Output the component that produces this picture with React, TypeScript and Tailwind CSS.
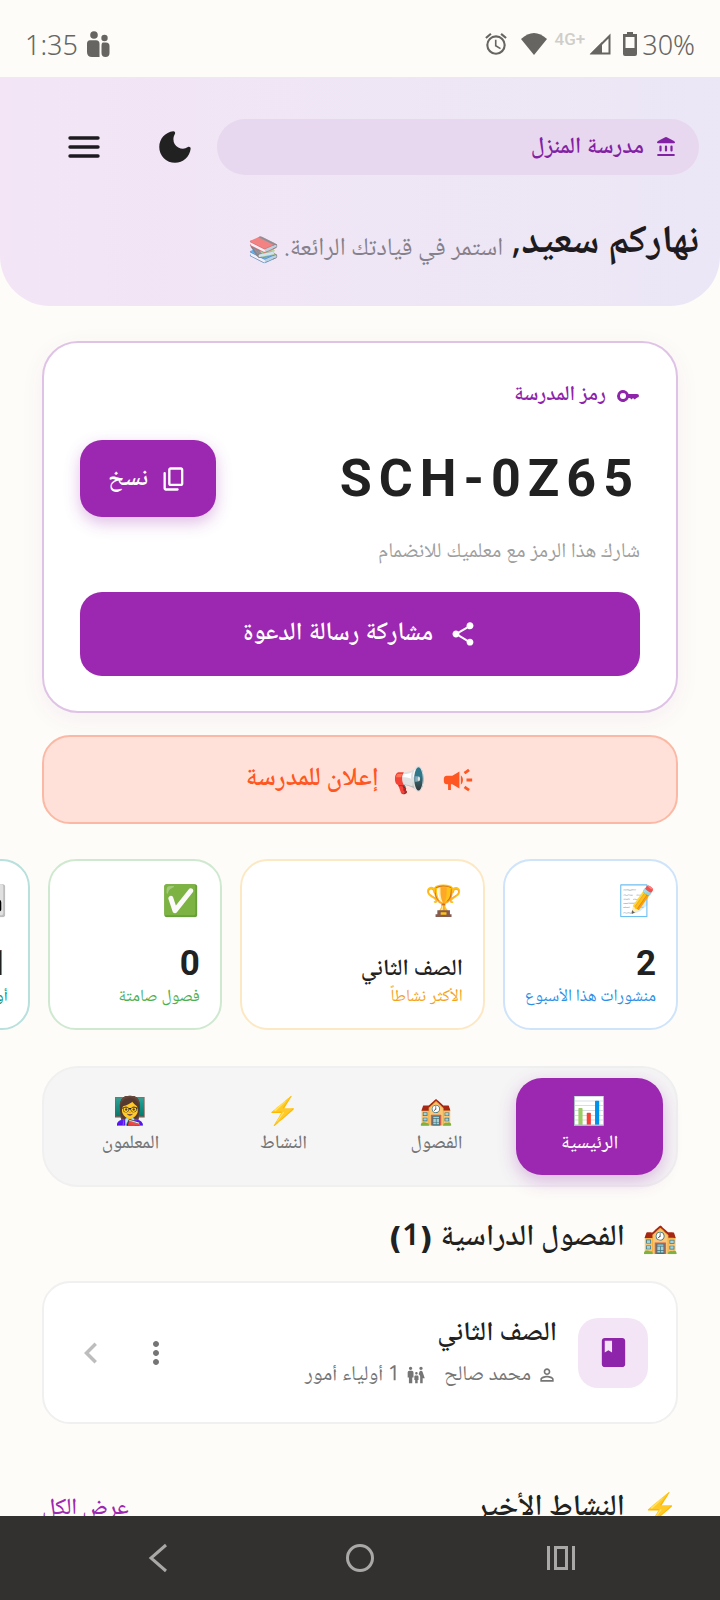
import React from "react";
import {
  MdCampaign,
  MdChevronLeft,
  MdClass,
  MdFamilyRestroom,
  MdMoreVert,
  MdPersonOutline,
  MdShare,
  MdOutlineAlarm,
} from "react-icons/md";

const numberStyle = "font-['Roboto',sans-serif] text-[35px] leading-[46px] font-bold";

const stats = [
  { emoji: "📝", value: "2", label: "منشورات هذا الأسبوع", box: "min-w-[174px] border-[#cfe4fa]", tone: "text-[#2b8fe6]", valueStyle: numberStyle },
  { emoji: "🏆", value: "الصف الثاني", label: "الأكثر نشاطاً", box: "min-w-[245px] border-[#fde8c4]", tone: "text-[#f5a11a]", valueStyle: "text-[23px] leading-[56px] font-semibold" },
  { emoji: "✅", value: "0", label: "فصول صامتة", box: "min-w-[174px] border-[#cfe9d1]", tone: "text-[#4caf50]", valueStyle: numberStyle },
  { emoji: "👪", value: "1", label: "أولياء أمور", box: "min-w-[174px] border-[#b8e0dd]", tone: "text-[#009688]", valueStyle: numberStyle },
];

const tabs = [
  { emoji: "📊", label: "الرئيسية", active: true },
  { emoji: "🏫", label: "الفصول", active: false },
  { emoji: "⚡", label: "النشاط", active: false },
  { emoji: "👩‍🏫", label: "المعلمون", active: false },
];

function StatusBar() {
  return (
    <div dir="ltr" className="flex h-[77px] shrink-0 items-center justify-between px-[25px] pt-[10px] text-[#666562]">
      <div className="flex items-center gap-2 font-['Noto_Sans',sans-serif] text-[27px] font-light">
        <span className="pt-[3px]">1:35</span>
        <svg viewBox="0 0 24 26" className="h-[26px] w-6" fill="currentColor">
          <circle cx="8" cy="4" r="3.800" />
          <circle cx="18.500" cy="7" r="3.200" />
          <path d="M4 9.300h6q3.500 0 3.500 3.500V26H6q-5 0-5-5v-8.200Q1 9.300 4 9.300zM17 11.500h3q3.500 0 3.500 3.500v7q0 4-4 4t-4-4v-7q0-3.500 1.500-3.500z" />
        </svg>
      </div>
      <div className="flex items-center font-['Noto_Sans',sans-serif] text-[27px] font-light">
        <MdOutlineAlarm className="size-[26px]" />
        <svg viewBox="0 0 26 22" className="ms-3 h-[22px] w-[26px]" fill="currentColor">
          <path d="M13 22 0 6Q13-6 26 6z" />
        </svg>
        <span className="ms-2 -mt-2 font-['Roboto',sans-serif] text-[17px] font-medium text-[#cfcecb]">4G+</span>
        <svg viewBox="0 0 22 22" className="ms-1 size-[22px]">
          <path d="M20.500 3v17.500H3z" fill="none" stroke="currentColor" strokeWidth="2" />
          <path d="M13 9v12H1z" fill="currentColor" />
        </svg>
        <svg viewBox="0 0 14 24" className="ms-3 h-6 w-[14px]" fill="currentColor" fillRule="evenodd">
          <path d="M4 0h6v2h4v20q0 2-2 2H2q-2 0-2-2V2h4zM2.500 5v11h9V5z" />
        </svg>
        <span className="ms-[5px] pt-[3px]">30%</span>
      </div>
    </div>
  );
}

function Header() {
  return (
    <header className="rounded-b-[50px] bg-gradient-to-r from-[#f3e5f5] to-[#ebe7f6] px-[21px] pt-[42px] pb-[33px]">
      <div className="flex items-center">
        <div className="flex h-14 flex-1 items-center gap-[11px] rounded-[28px] bg-[#e7d8ef] px-[22px] text-[#8321a5]">
          <svg viewBox="0 0 22 22" className="size-[22px]" fill="currentColor">
            <path d="M10.200 1.200q.8-.4 1.600 0L19 5.100q1 .6 1 1.300 0 .8-.9.800H2.900q-.9 0-.9-.800 0-.7 1-1.300z" />
            <path d="M5.500 10.500v4M11 10.500v4M16.500 10.500v4M3.200 19h15.600" fill="none" stroke="currentColor" strokeWidth="2.200" strokeLinecap="round" />
          </svg>
          <span className="text-[23px] font-semibold">مدرسة المنزل</span>
        </div>
        <button aria-label="الوضع الليلي" className="flex w-[84px] justify-center text-[#212121]">
          <svg viewBox="0 0 24 24" className="size-[42px]" fill="currentColor">
            <path d="M11.010 3.050C6.510 3.540 3 7.360 3 12a9 9 0 0 0 9 9c4.630 0 8.450-3.500 8.950-8 .09-.79-.78-1.420-1.540-.95A5.403 5.403 0 0 1 11.100 7.500c0-1.060.31-2.060.84-2.890.45-.67-.04-1.630-.93-1.560z" />
          </svg>
        </button>
        <button aria-label="القائمة" className="flex w-[98px] justify-center text-[#1d1b20]">
          <svg viewBox="0 0 32 24" className="h-6 w-8" fill="none" stroke="currentColor" strokeWidth="3.400" strokeLinecap="round">
            <path d="M2 3h28M2 12h28M2 21h28" />
          </svg>
        </button>
        <div className="w-[14px]" />
      </div>
      <h1 className="mt-[42px] flex h-14 items-baseline gap-2 whitespace-nowrap text-[39px] leading-[52px] font-bold text-[#1d1b20]">
        نهاركم سعيد,
        <span className="text-[25px] font-normal text-[#85808a]">استمر في قيادتك الرائعة. <span className="opacity-60">📚</span></span>
      </h1>
    </header>
  );
}

function CodeCard() {
  return (
    <section className="rounded-[36px] border-2 border-[#dfc3e6] bg-white px-9 py-[35px] shadow-[0_6px_24px_rgba(156,39,176,0.06)]">
      <h2 className="flex h-9 items-center gap-[10px] text-[21px] font-semibold text-[#8e24aa]">
        <svg viewBox="0 0 24 24" className="size-6" fill="currentColor">
          <path d="M12.650 10a6 6 0 1 0 0 4H14l1.500 1.500L17 14l1.500 1.500L21 13.800q2-.8 2-1.800 0-2-2-2zM7 15a3 3 0 1 1 0-6 3 3 0 0 1 0 6z" />
        </svg>
        رمز المدرسة
      </h2>
      <div className="mt-[26px] flex items-center justify-between">
        <span dir="ltr" className="font-['Roboto',sans-serif] text-[52px] leading-[77px] font-bold tracking-[7px] text-[#212121]">SCH-0Z65</span>
        <button className="flex h-[77px] w-[136px] items-center justify-center gap-3 rounded-[22px] bg-[#9c27b0] text-[24px] font-semibold text-white shadow-[0_6px_16px_rgba(156,39,176,0.3)]">
          <svg viewBox="0 0 24 24" className="size-7" fill="currentColor">
            <path d="M15 20H5V7c0-.55-.45-1-1-1s-1 .45-1 1v13c0 1.100.9 2 2 2h10c.55 0 1-.45 1-1s-.45-1-1-1zm5-4V4c0-1.100-.9-2-2-2H9c-1.100 0-2 .9-2 2v12c0 1.100.9 2 2 2h9c1.100 0 2-.9 2-2zm-2 0H9V4h9v12z" />
          </svg>
          نسخ
        </button>
      </div>
      <p className="mt-[19px] h-8 text-[21px] leading-8 text-[#9e9e9e]">شارك هذا الرمز مع معلميك للانضمام</p>
      <button className="mt-[24px] flex h-[84px] w-full items-center justify-center gap-4 rounded-[22px] bg-[#9c27b0] text-[25px] font-semibold text-white">
        <MdShare className="size-7" />
        مشاركة رسالة الدعوة
      </button>
    </section>
  );
}

export default function App() {
  return (
    <div dir="rtl" className="flex h-screen flex-col overflow-hidden bg-[#fdfcf8] font-['Noto_Naskh_Arabic_UI','DejaVu_Sans',sans-serif]">
      <StatusBar />
      <main className="min-h-0 flex-1 overflow-y-auto [scrollbar-width:none]">
        <Header />
        <div className="px-[42px] pt-[35px] pb-10">
          <CodeCard />
          <button className="mt-[22px] flex h-[89px] w-full items-center justify-center gap-4 rounded-[28px] border-2 border-[#fbb9a5] bg-[#ffe1da] text-[26px] font-semibold text-[#ff5722]">
            <MdCampaign className="size-[34px]" />
            <span className="flex items-center gap-[14px]"><span>📢</span> إعلان للمدرسة</span>
          </button>
          <div className="-mx-[42px] mt-[35px] flex gap-[18px] overflow-hidden px-[42px]">
            {stats.map((s) => (
              <article key={s.emoji} className={`flex h-[171px] shrink-0 flex-col rounded-[28px] border-2 bg-white px-5 pt-[18px] whitespace-nowrap ${s.box}`}>
                <span className="h-[44px] font-['Noto_Color_Emoji'] text-[30px] leading-[44px]">{s.emoji}</span>
                <strong className={`mt-[18px] h-[44px] text-[#212121] ${s.valueStyle}`}>{s.value}</strong>
                <span className={`h-6 text-[17px] leading-6 ${s.tone}`}>{s.label}</span>
              </article>
            ))}
          </div>
          <nav className="mt-[36px] grid h-[121px] grid-cols-4 rounded-[36px] border-2 border-[#f0f0f0] bg-[#f5f5f5] p-[10px]">
            {tabs.map((t) => (
              <button key={t.label} className={`mx-[3px] flex flex-col items-center justify-center rounded-[26px] text-[19px] ${t.active ? "bg-[#9c27b0] font-medium text-white shadow-[0_6px_18px_rgba(156,39,176,0.3)]" : "font-medium text-[#757575]"}`}>
                <span className="font-['Noto_Color_Emoji'] text-[27px] leading-[34px]">{t.emoji}</span>
                <span className="leading-[32px]">{t.label}</span>
              </button>
            ))}
          </nav>
          <h2 className="mt-[31px] flex h-10 items-center gap-[17px] text-[30px] leading-10 font-semibold text-[#212121]">
            <span className="font-['Noto_Color_Emoji'] text-[29px] leading-10">🏫</span>
            الفصول الدراسية (1)
          </h2>
          <article className="mt-[23px] flex h-[143px] items-center rounded-[28px] border-2 border-[#f0f0f0] bg-white ps-[28px] pe-[26px]">
            <div className="flex size-[70px] items-center justify-center rounded-[20px] bg-[#f3e5f5] text-[#8e24aa]">
              <MdClass className="size-[35px]" />
            </div>
            <div className="me-auto ms-[21px] pt-1">
              <h3 className="text-[27px] leading-10 font-semibold text-[#212121]">الصف الثاني</h3>
              <p className="flex items-center gap-[6px] text-[21px] leading-[42px] text-[#757575]">
                <MdPersonOutline className="size-5" />
                محمد صالح
                <MdFamilyRestroom className="ms-3 size-5" />
                1 أولياء أمور
              </p>
            </div>
            <button aria-label="خيارات" className="text-[#757575]"><MdMoreVert className="size-9" /></button>
            <button aria-label="فتح" className="ms-[26px] text-[#bdbdbd]"><MdChevronLeft className="size-[42px]" /></button>
          </article>
          <div className="mt-[60px] flex h-12 items-center justify-between">
            <h2 className="flex items-center gap-[17px] text-[30px] leading-10 font-semibold text-[#212121]">
              <span className="font-['Noto_Color_Emoji'] text-[29px] leading-10">⚡</span>
              النشاط الأخير
            </h2>
            <a href="#activity" className="text-[23px] font-medium text-[#9c27b0]">عرض الكل</a>
          </div>
        </div>
      </main>
      <div dir="ltr" className="flex h-[84px] shrink-0 items-center justify-around bg-[#333130] px-[58px] text-[#a9a8a6]">
        <button aria-label="رجوع">
          <svg viewBox="0 0 30 30" className="size-[30px]" fill="none" stroke="currentColor" strokeWidth="3"><path d="M22 2 7 15l15 13" /></svg>
        </button>
        <button aria-label="الشاشة الرئيسية">
          <svg viewBox="0 0 30 30" className="size-[30px]" fill="none" stroke="currentColor" strokeWidth="3"><circle cx="15" cy="15" r="12.500" /></svg>
        </button>
        <button aria-label="التطبيقات الأخيرة">
          <svg viewBox="0 0 30 30" className="size-[30px]" fill="none" stroke="currentColor" strokeWidth="3"><path d="M2.500 3v24M27.500 3v24M9.500 4.500h11v21h-11z" /></svg>
        </button>
      </div>
    </div>
  );
}
